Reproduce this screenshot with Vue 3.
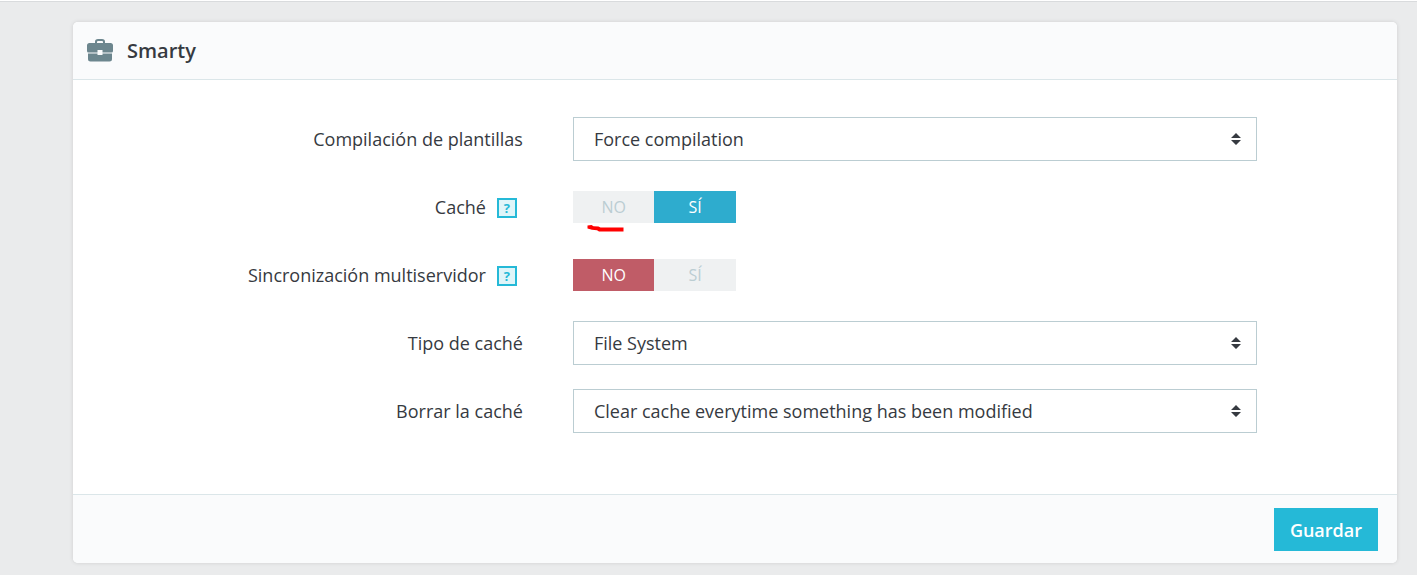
<script setup>
import { ref } from 'vue'

const compilation = ref('Force compilation')
const cacheType = ref('File System')
const clearCache = ref('Clear cache everytime something has been modified')
const cache = ref('yes')
const sync = ref('no')
</script>

<template>
  <main class="page">
    <form class="card" @submit.prevent>
      <header class="card-header">
        <svg class="case" viewBox="0 0 26 24" aria-hidden="true">
          <path fill-rule="evenodd" d="M8 4V2.800Q8 0 11 0h4Q18 0 18 2.800V4h5.500Q26 4 26 6.500V12q0 1.500-1.500 1.500h-9V11h-5v2.500h-9Q0 13.500 0 12V6.500Q0 4 2.500 4zM10 4h6V3q0-1-1-1h-4q-1 0-1 1zM1 14.500h9.500V16h5v-1.500H25V20q0 2.500-2.500 2.500h-19Q1 22.500 1 20z" />
        </svg>
        <h1>Smarty</h1>
      </header>
      <div class="card-body">
        <div class="row">
          <label class="caption" for="compilation">Compilación de plantillas</label>
          <div class="field">
            <select id="compilation" v-model="compilation"><option>Force compilation</option></select>
            <svg class="arrows" viewBox="0 0 10 12" aria-hidden="true"><path d="M0 5 5 0l5 5zM0 7h10l-5 5z" /></svg>
          </div>
        </div>
        <div class="row">
          <div id="cache-label" class="caption">Caché <button type="button" class="help" aria-label="Ayuda">?</button></div>
          <div class="switch" role="radiogroup" aria-labelledby="cache-label">
            <label><input v-model="cache" type="radio" name="cache" value="no"><span class="no">NO</span></label>
            <label><input v-model="cache" type="radio" name="cache" value="yes"><span class="yes">SÍ</span></label>
            <svg class="mark" viewBox="0 0 38 7" aria-hidden="true"><path d="M.5.5 4.500 0l2 1.200 5 .2 2 1h23v4H12L10 5.200 5 4.800.5 3.500z" /></svg>
          </div>
        </div>
        <div class="row">
          <div id="sync-label" class="caption">Sincronización multiservidor <button type="button" class="help" aria-label="Ayuda">?</button></div>
          <div class="switch" role="radiogroup" aria-labelledby="sync-label">
            <label><input v-model="sync" type="radio" name="sync" value="no"><span class="no">NO</span></label>
            <label><input v-model="sync" type="radio" name="sync" value="yes"><span class="yes">SÍ</span></label>
          </div>
        </div>
        <div class="row">
          <label class="caption" for="cache-type">Tipo de caché</label>
          <div class="field">
            <select id="cache-type" v-model="cacheType"><option>File System</option></select>
            <svg class="arrows" viewBox="0 0 10 12" aria-hidden="true"><path d="M0 5 5 0l5 5zM0 7h10l-5 5z" /></svg>
          </div>
        </div>
        <div class="row">
          <label class="caption" for="clear-cache">Borrar la caché</label>
          <div class="field">
            <select id="clear-cache" v-model="clearCache"><option>Clear cache everytime something has been modified</option></select>
            <svg class="arrows" viewBox="0 0 10 12" aria-hidden="true"><path d="M0 5 5 0l5 5zM0 7h10l-5 5z" /></svg>
          </div>
        </div>
      </div>
      <footer class="card-footer"><button class="save" type="submit">Guardar</button></footer>
    </form>
  </main>
</template>

<style>
body {
  background: #eaebec;
  border-top: 1px solid #fff;
}
html {
  background: #eaebec;
}
</style>

<style scoped>
.page {
  box-sizing: border-box;
  border-top: 1px solid #d9dbdd;
  padding: 20px 20px 12px 73px;
  color: #363a41;
  font: 18px/24px "Open Sans", sans-serif;
}
.card {
  background: #fff;
  border-radius: 5px;
  box-shadow: 0 0 4px rgba(0, 0, 0, 0.12);
  overflow: hidden;
}
.card-header {
  display: flex;
  align-items: center;
  gap: 14px;
  padding: 0 14px;
  height: 57px;
  background: #fafbfc;
  border-bottom: 1px solid #dbe6e9;
}
.case {
  width: 26px;
  height: 24px;
  fill: #6c868e;
}
h1 {
  margin: 0;
  font-size: 20px;
  line-height: 28px;
  font-weight: 600;
}
.card-body {
  display: grid;
  gap: 24px;
  padding: 37px 0 61px;
}
.row {
  display: grid;
  grid-template-columns: 38% 1fr;
  column-gap: 50px;
  align-items: center;
  min-height: 44px;
  padding-right: 140px;
}
.caption {
  display: flex;
  justify-content: flex-end;
  align-items: center;
  white-space: nowrap;
}
.help {
  box-sizing: border-box;
  width: 20px;
  height: 20px;
  margin: 2px 6px 0 11px;
  padding: 0;
  border: 2px solid #25b9d7;
  background: #dff5f9;
  color: #25b9d7;
  font: 700 13px/16px "Open Sans", sans-serif;
}
.field {
  position: relative;
}
select {
  box-sizing: border-box;
  display: block;
  width: 100%;
  height: 44px;
  padding: 0 40px 0 20px;
  border: 1px solid #bbcdd2;
  border-radius: 0;
  appearance: none;
  background: #fff;
  color: #363a41;
  font: 18px/24px "Open Sans", sans-serif;
}
.arrows {
  position: absolute;
  top: 16px;
  right: 16px;
  width: 10px;
  height: 12px;
  fill: #363a41;
}
.switch {
  position: relative;
  display: flex;
  width: 163px;
}
.switch label {
  position: relative;
  flex: 1;
}
.switch input {
  position: absolute;
  inset: 0;
  margin: 0;
  opacity: 0;
}
.switch span {
  display: block;
  background: #eff1f2;
  color: #bbcdd2;
  font-size: 16px;
  line-height: 32px;
  text-align: center;
}
.switch input:checked + .no {
  background: #c05c67;
  color: #fff;
}
.switch input:checked + .yes {
  background: #2eacce;
  color: #fff;
}
.mark {
  position: absolute;
  left: 14px;
  top: 34px;
  width: 38px;
  height: 7px;
  fill: #f00;
}
.card-footer {
  display: flex;
  justify-content: flex-end;
  padding: 13px 19px 12px;
  background: #fafbfc;
  border-top: 1px solid #dbe6e9;
}
.save {
  height: 43px;
  padding: 0 16px;
  border: 0;
  background: #25b9d7;
  color: #fff;
  font: 600 18px/24px "Open Sans", sans-serif;
}
</style>
